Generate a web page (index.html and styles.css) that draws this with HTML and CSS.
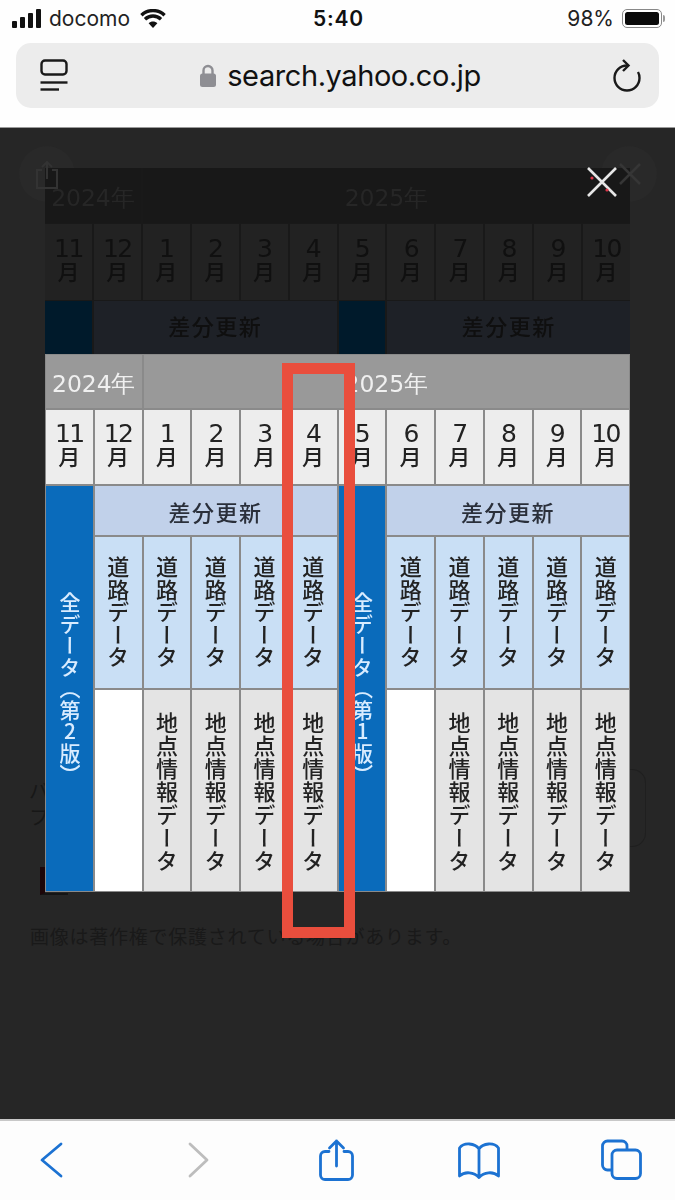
FILE: index.html
```html
<!DOCTYPE html>
<html lang="ja">
<head>
<meta charset="utf-8">
<title>search.yahoo.co.jp</title>
<link rel="stylesheet" href="styles.css">
</head>
<body>
<div class="phone">
  <header class="top">
    <div class="status">
      <div class="status-left">
        <span class="signal"><i class="b1"></i><i class="b2"></i><i class="b3"></i><i class="b4"></i></span>
        <span class="carrier">docomo</span>
        <svg class="wifi" viewBox="0 0 26 19"><path d="M13 19 L8.6 14.2 C11 11.9 15 11.9 17.4 14.2Z" /><path class="wifi-arc" d="M5 10.2 C9.6 5.9 16.4 5.9 21 10.2" /><path class="wifi-arc" d="M1.4 6.2 C8 0 18 0 24.6 6.2" /></svg>
      </div>
      <div class="clock">5:40</div>
      <div class="status-right">
        <span class="pct">98%</span>
        <span class="battery"><span class="battery-fill"></span></span>
        <span class="battery-cap"></span>
      </div>
    </div>
    <div class="urlbar">
      <svg class="tabs-ico" viewBox="0 0 28 33"><rect x="1.5" y="1.5" width="25" height="14" rx="3.5"/><path d="M0.5 23.5 H27.5"/><path d="M0.5 30.5 H19"/></svg>
      <div class="url"><svg class="lock" viewBox="0 0 16 23"><path class="lock-bow" d="M3.5 11 V6.5 a4.5 4.5 0 0 1 9 0 V11"/><rect x="0" y="9.5" width="16" height="13.5" rx="2.5"/></svg><span>search.yahoo.co.jp</span></div>
      <svg class="reload" viewBox="0 0 28 33"><path d="M14 6.5 A12.5 12.5 0 1 0 26.5 19 Q26.5 15.5 25 13"/><path d="M10 1 L15.5 6.5 L10 12"/></svg>
    </div>
  </header>

  <main class="stage">
    <div class="ghost-circle gc-left"></div>
    <div class="ghost-circle gc-right"></div>
    <svg class="ghost-share" viewBox="0 0 24 28"><path d="M7 9 H2 V27 H22 V9 H17 M12 18 V1 M7 6 L12 1 L17 6"/></svg>
    <svg class="ghost-x" viewBox="0 0 24 24"><path d="M2 22 L22 2 M2 2 L22 22"/></svg>
    <span class="ghost-word gw-1">バ</span>
    <span class="ghost-word gw-2">フ</span>
    <span class="ghost-frame"></span>
    <span class="ghost-card"></span>

    <div class="chart chart-back">
      <div class="c year y1">2024年</div>
      <div class="c year y2">2025年</div>
      <div class="c month"><b>11</b>月</div><div class="c month"><b>12</b>月</div><div class="c month"><b>1</b>月</div><div class="c month"><b>2</b>月</div><div class="c month"><b>3</b>月</div><div class="c month"><b>4</b>月</div><div class="c month"><b>5</b>月</div><div class="c month"><b>6</b>月</div><div class="c month"><b>7</b>月</div><div class="c month"><b>8</b>月</div><div class="c month"><b>9</b>月</div><div class="c month"><b>10</b>月</div>
      <div class="c full-stub"></div>
      <div class="c diff">差分更新</div>
      <div class="c full-stub"></div>
      <div class="c diff">差分更新</div>
    </div>

    <div class="chart chart-front">
      <div class="c year y1">2024年</div>
      <div class="c year y2">2025年</div>
      <div class="c month"><b>11</b>月</div><div class="c month"><b>12</b>月</div><div class="c month"><b>1</b>月</div><div class="c month"><b>2</b>月</div><div class="c month"><b>3</b>月</div><div class="c month"><b>4</b>月</div><div class="c month"><b>5</b>月</div><div class="c month"><b>6</b>月</div><div class="c month"><b>7</b>月</div><div class="c month"><b>8</b>月</div><div class="c month"><b>9</b>月</div><div class="c month"><b>10</b>月</div>
      <div class="c full"><span>全データ（第2版）</span></div>
      <div class="c diff">差分更新</div>
      <div class="c full"><span>全データ（第1版）</span></div>
      <div class="c diff">差分更新</div>
      <div class="c road"><span>道路データ</span></div><div class="c road"><span>道路データ</span></div><div class="c road"><span>道路データ</span></div><div class="c road"><span>道路データ</span></div><div class="c road"><span>道路データ</span></div>
      <div class="c road"><span>道路データ</span></div><div class="c road"><span>道路データ</span></div><div class="c road"><span>道路データ</span></div><div class="c road"><span>道路データ</span></div><div class="c road"><span>道路データ</span></div>
      <div class="c blank"></div><div class="c point"><span>地点情報データ</span></div><div class="c point"><span>地点情報データ</span></div><div class="c point"><span>地点情報データ</span></div><div class="c point"><span>地点情報データ</span></div>
      <div class="c blank"></div><div class="c point"><span>地点情報データ</span></div><div class="c point"><span>地点情報データ</span></div><div class="c point"><span>地点情報データ</span></div><div class="c point"><span>地点情報データ</span></div>
    </div>

    <p class="notice">画像は著作権で保護されている場合があります。</p>

    <svg class="close" viewBox="0 0 30 30"><path class="close-x" d="M1 1 L29 29 M29 1 L1 29"/><circle class="close-dot" cx="5" cy="11" r="1.6"/><circle class="close-dot" cx="20" cy="23" r="1.6"/></svg>
    <div class="marker"></div>
  </main>

  <footer class="toolbar">
    <svg class="tool" viewBox="0 0 42 42"><path d="M31 5 L12 21 L31 37"/></svg>
    <svg class="tool tool-off" viewBox="0 0 42 42"><path d="M17 5 L34 21 L17 37"/></svg>
    <svg class="tool" viewBox="0 0 42 42"><path d="M14 12.5 H10 a4.500 4.500 0 0 0 -4.500 4.500 V36 a4.500 4.500 0 0 0 4.500 4.500 H33 a4.500 4.500 0 0 0 4.500 -4.500 V17 a4.500 4.500 0 0 0 -4.500 -4.500 H29"/><path d="M21.500 27 V2 M14.500 9 L21.500 2 L28.500 9"/></svg>
    <svg class="tool" viewBox="0 0 42 42"><path d="M21 10 C17 4 6 3 1.500 9 V37 C7 32 16 33 21 38.500 C26 33 35 32 40.500 37 V9 C36 3 25 4 21 10 Z M21 10 V38.500"/></svg>
    <svg class="tool" viewBox="0 0 42 42"><path d="M11.500 31 H7.500 a5 5 0 0 1 -5 -5 V7 a5 5 0 0 1 5 -5 H22 a5 5 0 0 1 5 5 V10.500"/><rect x="12" y="11" width="28.500" height="28.500" rx="5"/></svg>
  </footer>
</div>
</body>
</html>
```

FILE: styles.css
```css
* { box-sizing: border-box; }
html, body { margin: 0; padding: 0; }
body { font-family: "Noto Sans CJK JP", "Noto Sans", sans-serif; background: #262626; }

.phone { width: 675px; height: 1200px; display: flex; flex-direction: column; overflow: hidden; }

/* browser chrome */
.top { height: 128px; flex: none; background: #fefefe; border-bottom: 1px solid #9a9a9a; }
.status { height: 43px; display: grid; grid-template-columns: 1fr auto 1fr; align-items: center; padding: 0 10px 6px 12px; color: #111; font-family: Inter, "Liberation Sans", sans-serif; }
.status-left { display: flex; align-items: center; }
.signal { display: flex; align-items: flex-end; gap: 3px; height: 19px; width: 29px; }
.signal i { display: block; width: 5px; background: #111; border-radius: 1px; }
.b1 { height: 7px; } .b2 { height: 11px; } .b3 { height: 15px; } .b4 { height: 19px; }
.carrier { font-size: 21px; margin-left: 8px; letter-spacing: 0; color: #222; }
.wifi { width: 26px; height: 19px; margin-left: 10px; fill: #111; }
.wifi-arc { fill: none; stroke: #111; stroke-width: 3.4; }
.clock { font-size: 21px; font-weight: 600; letter-spacing: .8px; }
.status-right { display: flex; align-items: center; justify-content: flex-end; }
.pct { font-size: 21px; color: #222; margin-right: 8px; }
.battery { width: 40px; height: 19px; border: 1.500px solid #888; border-radius: 5px; padding: 2px; display: block; }
.battery-fill { display: block; width: 100%; height: 100%; background: #0a0a0a; border-radius: 2.500px; }
.battery-cap { width: 2px; height: 7px; background: #999; border-radius: 0 2px 2px 0; margin-left: 1px; }

.urlbar { height: 65px; margin: 0 16px; background: #ececec; border-radius: 15px; display: grid; grid-template-columns: 1fr auto 1fr; align-items: center; padding: 0 18px 0 24px; }
.tabs-ico { width: 28px; height: 33px; fill: none; stroke: #1a1a1a; stroke-width: 2.400; }
.url { display: flex; align-items: center; gap: 11px; font-family: Inter, "Liberation Sans", sans-serif; font-size: 29px; color: #111; letter-spacing: -0.42px; }
.lock { width: 16px; height: 23px; fill: #8e8e93; }
.lock-bow { fill: none; stroke: #8e8e93; stroke-width: 2.400; }
.reload { width: 28px; height: 33px; justify-self: end; fill: none; stroke: #1a1a1a; stroke-width: 2.400; }

/* dark stage */
.stage { position: relative; flex: 1; background: #262626; padding: 40px 45px 0; }

.chart { width: 585px; display: grid; grid-template-columns: repeat(12, 1fr); column-gap: 2px; row-gap: 2px; }
.c { display: flex; align-items: center; justify-content: center; min-width: 0; }
.year { font-family: "DejaVu Sans", sans-serif; font-size: 23.500px; letter-spacing: -.1px; padding-top: 4px; }
.y1 { grid-column: 1 / span 2; }
.y2 { grid-column: 3 / span 10; }
.month { flex-direction: column; font-size: 22px; font-weight: 500; line-height: 21px; padding-bottom: 6px; }
.month b { font-family: "DejaVu Sans", sans-serif; font-weight: 400; font-size: 25px; line-height: 23px; letter-spacing: -1.500px; }
.diff { grid-column: span 5; font-size: 22px; font-weight: 500; letter-spacing: 1.500px; }
.road span, .point span, .full span { writing-mode: vertical-rl; text-orientation: upright; white-space: nowrap; }
.road span, .point span { font-size: 22px; line-height: 1; font-weight: 500; color: #222; }

.chart-front { padding: 1px; background: #8a8a8a; grid-template-rows: 53px 74px 49px 151px 201px; position: relative; filter: blur(.5px); }
.chart-front .year { background: #999; color: #f0f0f0; }
.chart-front .month { background: #ededed; color: #222; }
.chart-front .diff { background: #c1d1ea; color: #2a2f3a; }
.full { grid-row: span 3; background: #0a6bbb; color: #d9ecff; }
.full span { font-size: 21px; font-weight: 500; line-height: 1; letter-spacing: .5px; }
.road { background: #c9dff5; align-items: flex-start; padding-top: 19px; }
.road span { letter-spacing: .5px; }
.point { background: #e4e4e4; align-items: flex-start; padding-top: 22px; }
.point span { letter-spacing: 1px; }
.blank { background: #fff; }

.chart-back { background: #191919; grid-template-rows: 55px 76px 53px; row-gap: 1px; column-gap: 2px; filter: blur(.5px); }
.chart-back .year { background: #181818; color: #262626; }
.chart-back .month { background: #222; color: #101010; }
.chart-back .diff { background: #1e2127; color: #0f0f0f; padding-bottom: 5px; }
.full-stub { background: #001a2b; }

.notice { margin: 32px 0 0 -15px; font-size: 19px; line-height: 24px; letter-spacing: .75px; color: #191919; white-space: nowrap; }

/* things lying over or under the chart */
.ghost-circle { position: absolute; width: 56px; height: 56px; border-radius: 50%; background: #292929; top: 18px; }
.gc-left { left: 19px; }
.gc-right { left: 601px; width: 56px; }
.ghost-share { position: absolute; z-index: 1; left: 35px; top: 33px; width: 24px; height: 28px; fill: none; stroke: #333; stroke-width: 2; }
.ghost-x { position: absolute; z-index: 1; left: 618px; top: 34px; width: 24px; height: 24px; fill: none; stroke: #363636; stroke-width: 2.500; }
.ghost-word { position: absolute; left: 29px; font-size: 20px; line-height: 24px; color: #171717; }
.gw-1 { top: 651px; }
.gw-2 { top: 677px; }
.ghost-frame { position: absolute; left: 40px; top: 739px; width: 28px; height: 28px; border-left: 5px solid #1c0508; border-bottom: 2px solid #141414; }
.ghost-card { position: absolute; left: 600px; top: 641px; width: 46px; height: 78px; border: 1px solid #1f1f1f; border-left: 0; border-radius: 0 14px 14px 0; }

.close { position: absolute; z-index: 2; left: 587px; top: 39px; width: 30px; height: 30px; }
.close-x { fill: none; stroke: #e6e6e6; stroke-width: 2.600; }
.close-dot { fill: #e0364a; }

.marker { position: absolute; z-index: 2; left: 282px; top: 235px; width: 73px; height: 575px; border: 11.500px solid #e94e3d; }

/* bottom toolbar */
.toolbar { height: 81px; flex: none; background: #fdfdfd; border-top: 2px solid #c8c8c8; display: flex; align-items: center; justify-content: space-between; padding: 0 33px 2px 30px; }
.tool { width: 42px; height: 42px; fill: none; stroke: #1c72d2; stroke-width: 2.800; stroke-linecap: round; stroke-linejoin: round; }
.tool-off { stroke: #bdbdbd; }
```
